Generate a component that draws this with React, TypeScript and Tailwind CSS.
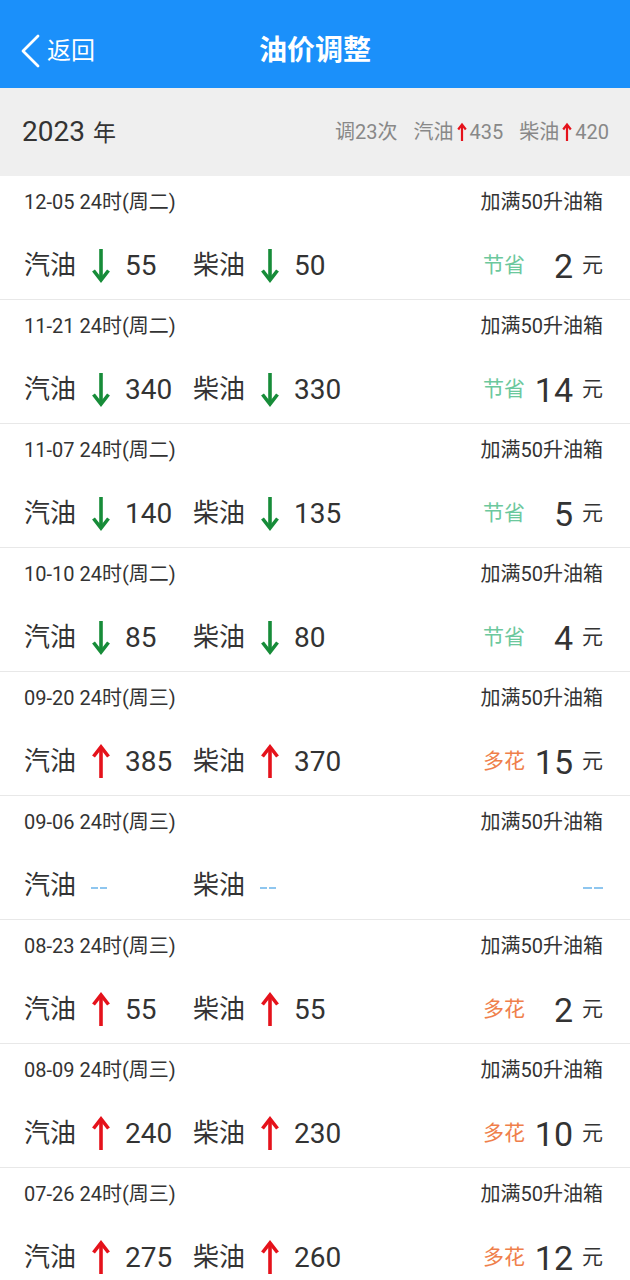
import React from "react";

type Adjustment = {
  date: string;
  gas: number | null;
  diesel: number | null;
  amount: number | null;
};

const rows: Adjustment[] = [
  { date: "12-05 24时(周二)", gas: -55, diesel: -50, amount: -2 },
  { date: "11-21 24时(周二)", gas: -340, diesel: -330, amount: -14 },
  { date: "11-07 24时(周二)", gas: -140, diesel: -135, amount: -5 },
  { date: "10-10 24时(周二)", gas: -85, diesel: -80, amount: -4 },
  { date: "09-20 24时(周三)", gas: 385, diesel: 370, amount: 15 },
  { date: "09-06 24时(周三)", gas: null, diesel: null, amount: null },
  { date: "08-23 24时(周三)", gas: 55, diesel: 55, amount: 2 },
  { date: "08-09 24时(周三)", gas: 240, diesel: 230, amount: 10 },
  { date: "07-26 24时(周三)", gas: 275, diesel: 260, amount: 12 },
];

const font = "font-['Roboto','Noto_Sans_CJK_SC',sans-serif]";

function Arrow({ up }: { up: boolean }) {
  if (up) {
    return (
      <svg width="20" height="36" viewBox="0 0 20 36" className="shrink-0">
        <path d="M10 34 L10 4" stroke="#e5121b" strokeWidth="3.6" fill="none" />
        <path d="M2.5 12.5 L10 3 L17.5 12.5" stroke="#e5121b" strokeWidth="3.6" fill="none" strokeLinejoin="miter" />
      </svg>
    );
  }
  return (
    <svg width="20" height="36" viewBox="0 0 20 36" className="shrink-0">
      <path d="M10 1 L10 31" stroke="#178c39" strokeWidth="3.6" fill="none" />
      <path d="M2.5 22.5 L10 32 L17.5 22.5" stroke="#178c39" strokeWidth="3.6" fill="none" strokeLinejoin="miter" />
    </svg>
  );
}

function SmallUp() {
  return (
    <svg width="10" height="20" viewBox="0 0 10 20" className="mx-[3px] shrink-0">
      <path d="M5 19 L5 3" stroke="#e5121b" strokeWidth="2.2" fill="none" />
      <path d="M1.2 7.5 L5 2.5 L8.8 7.5" stroke="#e5121b" strokeWidth="2.2" fill="none" />
    </svg>
  );
}

// "--" placeholder drawn as two short bars
function Dashes({ wide }: { wide?: boolean }) {
  const bar = wide ? "h-[2px] w-[9px] bg-[#8ec6ef]" : "h-[2px] w-[7px] bg-[#8ec6ef]";
  return (
    <span className="mt-[4px] flex gap-[2px]">
      <span className={bar} />
      <span className={bar} />
    </span>
  );
}

function Fuel({ label, value }: { label: string; value: number | null }) {
  return (
    <div className="flex w-[169px] items-center">
      <span className="text-[26px] text-[#333]">{label}</span>
      {value === null ? (
        <span className="ml-[15px]">
          <Dashes />
        </span>
      ) : (
        <>
          <span className="ml-[15px]">
            <Arrow up={value > 0} />
          </span>
          <span className="ml-[14px] text-[28px] text-[#333]">{Math.abs(value)}</span>
        </>
      )}
    </div>
  );
}

function Row({ row }: { row: Adjustment }) {
  const save = row.amount !== null && row.amount < 0;
  return (
    <div className="border-b border-[#e8e8e8] pl-[24px] pr-[27px]">
      <div className="flex h-[52px] items-center justify-between text-[20px] text-[#333]">
        <span>{row.date}</span>
        <span>加满50升油箱</span>
      </div>
      <div className="flex h-[71px] items-center pt-[4px]">
        <Fuel label="汽油" value={row.gas} />
        <Fuel label="柴油" value={row.diesel} />
        {row.amount === null ? (
          <span className="ml-auto">
            <Dashes wide />
          </span>
        ) : (
          <div className="ml-auto flex items-center">
            <span className={`w-[44px] text-[21px] ${save ? "text-[#6cc89d]" : "text-[#ef7f4b]"}`}>
              {save ? "节省" : "多花"}
            </span>
            <span className="w-[46px] text-right text-[34px] leading-none text-[#333]">{Math.abs(row.amount)}</span>
            <span className="ml-[9px] text-[21px] text-[#333]">元</span>
          </div>
        )}
      </div>
    </div>
  );
}

export default function App() {
  return (
    <div className={`min-h-[1280px] w-[630px] bg-white ${font}`}>
      <header className="relative flex h-[88px] items-center justify-center bg-[#1b90fa] pt-[14px]">
        <div className="absolute left-[20px] top-0 flex h-full items-center pt-[14px]">
          <svg width="22" height="34" viewBox="0 0 22 34">
            <path d="M18 2 L3 17 L18 32" stroke="#fff" strokeWidth="2.8" fill="none" strokeLinecap="round" strokeLinejoin="round" />
          </svg>
          <span className="ml-[5px] text-[24px] text-white">返回</span>
        </div>
        <h1 className="text-[28px] font-bold text-white">油价调整</h1>
      </header>
      <div className="flex h-[88px] items-center justify-between bg-[#efefef] pl-[22px] pr-[21px]">
        <div className="flex items-baseline text-[#333]">
          <span className="text-[28px]">2023</span>
          <span className="ml-[8px] text-[23px]">年</span>
        </div>
        <div className="flex items-center text-[20px] text-[#888]">
          <span>调23次</span>
          <span className="ml-[16px]">汽油</span>
          <SmallUp />
          <span>435</span>
          <span className="ml-[16px]">柴油</span>
          <SmallUp />
          <span>420</span>
        </div>
      </div>
      {rows.map((row) => (
        <Row key={row.date} row={row} />
      ))}
    </div>
  );
}
